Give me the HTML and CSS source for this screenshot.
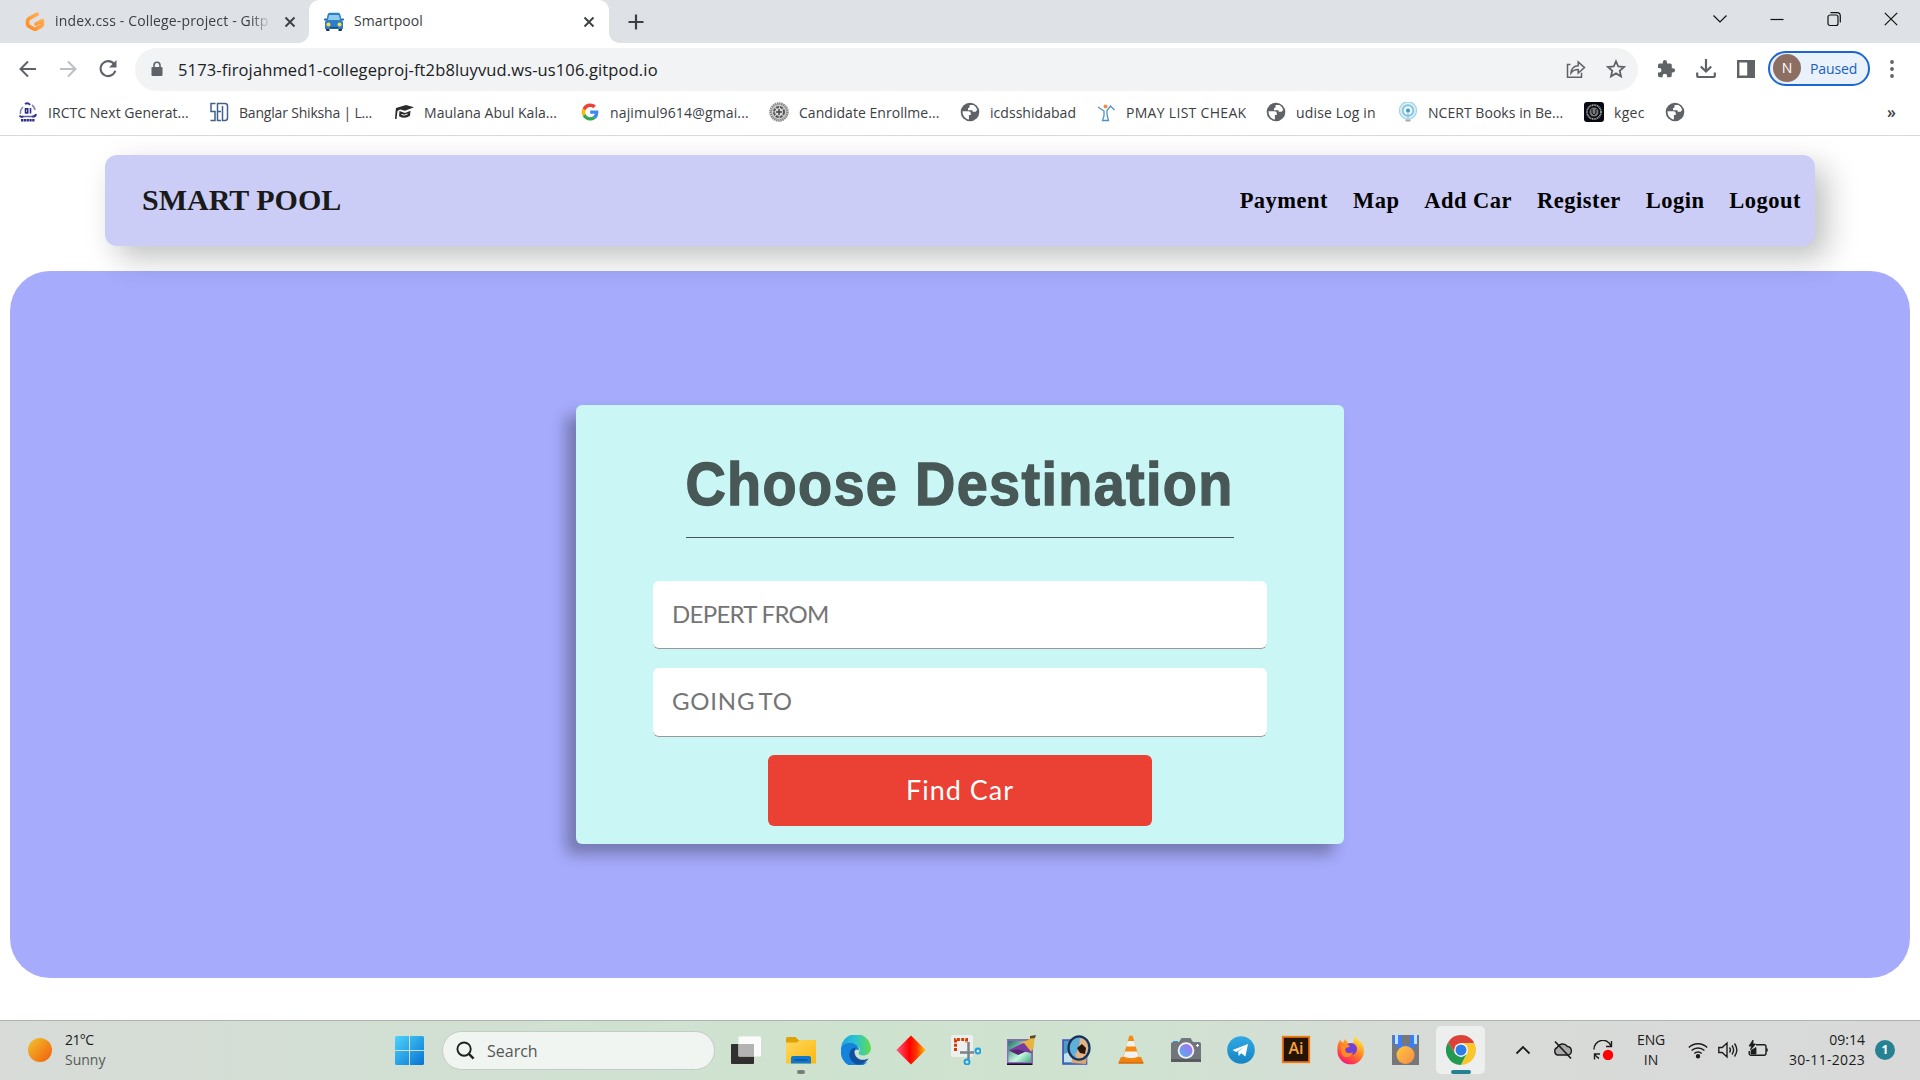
FILE: index.html
```html
<!DOCTYPE html>
<html lang="en">
<head>
<meta charset="utf-8">
<title>Smartpool</title>
<link rel="stylesheet" href="styles.css">
</head>
<body>
<svg class="defs" width="0" height="0">
  <defs>
    <linearGradient id="sun" x1="0" y1="0" x2="1" y2="1"><stop offset="0" stop-color="#f0c52e"/><stop offset="1" stop-color="#f25c0a"/></linearGradient>
    <linearGradient id="win" x1="0" y1="0" x2="1" y2="1"><stop offset="0" stop-color="#4fd3fb"/><stop offset="1" stop-color="#0673d2"/></linearGradient>
    <linearGradient id="gp" x1="0" y1="1" x2="1" y2="0"><stop offset="0" stop-color="#ff8a1f"/><stop offset="1" stop-color="#ffb45b"/></linearGradient>
    <linearGradient id="folder" x1="0" y1="0" x2="1" y2="1"><stop offset="0" stop-color="#ffd75e"/><stop offset="1" stop-color="#fbb90d"/></linearGradient>
    <linearGradient id="edgeA" x1="0" y1="0" x2="1" y2="0"><stop offset="0" stop-color="#1fa3e0"/><stop offset=".5" stop-color="#2cc4cf"/><stop offset="1" stop-color="#62dc4b"/></linearGradient>
    <linearGradient id="dia"><stop offset="0" stop-color="#ff5a7d"/><stop offset=".45" stop-color="#ff0000"/><stop offset=".7" stop-color="#ff3a00"/><stop offset="1" stop-color="#ffc400"/></linearGradient>
    <linearGradient id="lens" x1="0" y1="1" x2="1" y2="0"><stop offset="0" stop-color="#4cb1f5"/><stop offset="1" stop-color="#b36be8"/></linearGradient>
    <linearGradient id="tg" x1="0" y1="0" x2="0" y2="1"><stop offset="0" stop-color="#2fa9e4"/><stop offset="1" stop-color="#1784c4"/></linearGradient>
    <linearGradient id="ff" x1=".8" y1="0" x2=".2" y2="1"><stop offset="0" stop-color="#fff04a"/><stop offset=".45" stop-color="#ff8b22"/><stop offset=".8" stop-color="#ff3750"/><stop offset="1" stop-color="#e6158a"/></linearGradient>
    <linearGradient id="medal" x1="0" y1="0" x2="1" y2="1"><stop offset="0" stop-color="#ffc83a"/><stop offset="1" stop-color="#f88b4c"/></linearGradient>
    <linearGradient id="photo" x1="0" y1="0" x2="1" y2="1"><stop offset="0" stop-color="#0d6b58"/><stop offset=".6" stop-color="#c6f7e0"/><stop offset="1" stop-color="#39a57b"/></linearGradient>
    <symbol id="globe" viewBox="0 0 20 20"><circle cx="10" cy="10" r="9.300" fill="#5f6368"/><path d="M2.500 9.200H8.600q2.200 0 2.200 2v1.700H8.900V17.400C5.200 17 2.400 13.500 2.500 9.200ZM9.600 3H13.500Q16.300 4.500 17.200 7.800L15.700 9.800H12.600V8.200H8V6.200q1.600 0 1.600-1.600Z" fill="#fff"/></symbol>
    <symbol id="x" viewBox="0 0 12 12"><path d="M1.500 1.500l9 9M10.500 1.500l-9 9" stroke="#3c4043" stroke-width="1.900" fill="none"/></symbol>
  </defs>
</svg>

<header class="browser">
  <div class="tabstrip">
    <div class="tab tab-idle">
      <svg class="favicon" viewBox="0 0 20 20"><path d="M12.200 2.200L4 6.600Q2.600 7.400 2.600 9v3.200q0 1.300 1.200 2l5 2.700q1.200.6 2.400 0l5-2.700q1.200-.7 1.200-2V8.700l-6.300 3.500" fill="none" stroke="url(#gp)" stroke-width="3.700" stroke-linejoin="round" stroke-linecap="round"/></svg>
      <span class="tab-title fade">index.css - College-project - Gitp</span>
      <svg class="close"><use href="#x"/></svg>
    </div>
    <div class="tab tab-active">
      <svg class="favicon" viewBox="0 0 20 20"><path d="M2 14h3.500v5H3q-1 0-1-1ZM14.500 14H18v4q0 1-1 1h-2.500Z" fill="#28323b"/><path d="M3.500 3Q4 .8 6 .8h8q2 0 2.500 2.200L17.500 8Q19 9 19 10.500V17H1v-6.500Q1 9 2.500 8Z" fill="#2c7fc6"/><path d="M5.200 3h9.600l1.300 5H3.900Z" fill="#8fcdf0"/><rect x="0" y="6.500" width="3" height="2" rx="1" fill="#1b5f9c"/><rect x="17" y="6.500" width="3" height="2" rx="1" fill="#1b5f9c"/><path d="M6 15h8v1.500H6Z" fill="#174f85"/><circle cx="4.500" cy="12.500" r="2" fill="#ffd84b"/><circle cx="15.500" cy="12.500" r="2" fill="#ffd84b"/></svg>
      <span class="tab-title second">Smartpool</span>
      <svg class="close"><use href="#x"/></svg>
    </div>
    <svg class="newtab" viewBox="0 0 16 16"><path d="M8 .5v15M.5 8h15" stroke="#3c4043" stroke-width="2.200"/></svg>
    <div class="winctl">
      <svg viewBox="0 0 16 16"><path d="M1.500 4.500L8 11l6.500-6.500" /></svg>
      <svg viewBox="0 0 16 16"><path d="M1.500 8.500h13" /></svg>
      <svg viewBox="0 0 16 16"><rect x="2" y="4" width="10" height="10.500" rx="2"/><path d="M4.500 1.700h6.500q3.300 0 3.300 3.300v6.500"/></svg>
      <svg viewBox="0 0 16 16"><path d="M1.800 1.800l12.400 12.400M14.200 1.800L1.800 14.200"/></svg>
    </div>
  </div>

  <div class="toolbar">
    <svg class="tb" viewBox="0 0 20 20"><path d="M18 10H3M10 2.500L2.500 10l7.500 7.500" stroke="#5f6368" stroke-width="2" fill="none"/></svg>
    <svg class="tb" viewBox="0 0 20 20"><path d="M2 10h15M10 2.500l7.500 7.500-7.500 7.500" stroke="#bcbfc3" stroke-width="2" fill="none"/></svg>
    <svg class="tb" viewBox="0 0 20 20"><path d="M16.200 5.200A7.500 7.500 0 1 0 17.300 11.800" stroke="#5f6368" stroke-width="2.100" fill="none"/><path d="M18.500 1v7.500H11Z" fill="#5f6368"/></svg>
    <div class="omnibox">
      <svg class="lock" viewBox="0 0 12 16"><path d="M3 7V4.200a3 3 0 0 1 6 0V7" fill="none" stroke="#5f6368" stroke-width="1.600"/><rect x=".5" y="6" width="11" height="9" rx="1.300" fill="#5f6368"/></svg>
      <span class="url">5173-firojahmed1-collegeproj-ft2b8luyvud.ws-us106.gitpod.io</span>
      <svg class="share" viewBox="0 0 20 20"><path d="M4.500 5.500H1.500v12.800h14v-4.500M5 14c.4-4.600 3-7 7.200-7.200V3l6.300 5.600-6.300 5.500v-3.600C9 10.400 7 11.400 5 14Z" fill="none" stroke="#5f6368" stroke-width="1.500"/></svg>
      <svg class="star" viewBox="0 0 20 20"><path d="M10 2.300l2.300 5.200 5.700.5-4.300 3.800 1.300 5.600-5-3-5 3 1.300-5.600L2 8l5.700-.5Z" fill="none" stroke="#5f6368" stroke-width="1.800"/></svg>
    </div>
    <div class="actions">
      <svg viewBox="0 0 20 20"><path d="M17 9.200h-1.200V6q0-1.600-1.600-1.600H11V3.200a2.100 2.100 0 0 0-4.200 0v1.200H3.600Q2 4.400 2 6v3h1.200a2.300 2.300 0 0 1 0 4.600H2v3Q2 18.200 3.600 18.200h3V17a2.200 2.200 0 0 1 4.500 0v1.200h3.100q1.600 0 1.600-1.600v-3.200H17a2.100 2.100 0 0 0 0-4.200Z" fill="#5f6368"/></svg>
      <svg viewBox="0 0 20 20"><path d="M10 0v12M4.800 7.500l5.200 5 5.200-5M1.200 13.500v3q0 1.500 1.500 1.500h14.600q1.500 0 1.500-1.500v-3" stroke="#5f6368" stroke-width="2.200" fill="none"/></svg>
      <svg viewBox="0 0 20 20"><path fill-rule="evenodd" d="M1 1h18v18H1ZM3.400 3.500v13h7.800v-13Z" fill="#5f6368"/></svg>
    </div>
    <div class="profile"><b>N</b><span>Paused</span></div>
    <svg class="dots" viewBox="0 0 6 20"><circle cx="3" cy="3" r="1.900"/><circle cx="3" cy="10" r="1.900"/><circle cx="3" cy="17" r="1.900"/></svg>
  </div>

  <nav class="bookmarks">
    <a><svg viewBox="0 0 20 20"><path d="M2.500 12A8 8 0 0 1 5 5M14 3A8 8 0 0 1 17 8" fill="none" stroke="#8585bb" stroke-width="1.600"/><path d="M7 2q3-2 5 1M1.500 13.500q2 2.500 4 .5M14 14.500q3.500.5 4-2.500" fill="none" stroke="#33338e" stroke-width="2"/><path d="M7.500 6v5.500M7.500 6.700h2.200v4.200H7.500M12.500 6v5.500" stroke="#2c2c88" stroke-width="1.600" fill="none"/><path d="M5.500 14.500h9" stroke="#5a5aa5" stroke-width="1.500"/><path d="M3 18.300h14" stroke="#2c2c88" stroke-width="2.500" stroke-dasharray="2.300 .5"/></svg><span>IRCTC Next Generat...</span></a>
    <a class="tight"><svg viewBox="0 0 20 20"><path d="M6.500 1.500H2v8h4v9H1.500M12 1.500H8.500v17H12M8.500 9.500H12M12 1.500h4q2.500 0 2.500 2.500v12q0 2.500-2.500 2.500h-2.500V4" fill="none" stroke="#40618a" stroke-width="1.500"/></svg><span>Banglar Shiksha | L...</span></a>
    <a><svg viewBox="0 0 20 20"><path d="M2 6L12 3l8 2.200-9 3.600L6 7.500 3.500 9l-1 8H1l.6-8Z" fill="#2b2b2b"/><path d="M5.500 9l5.500 2 5.500-2.300-.5 5q-5 4-11 .5Z" fill="#2b2b2b"/><path d="M7.500 12.500q3 1.500 6-.5" stroke="#fff" fill="none"/></svg><span>Maulana Abul Kala...</span></a>
    <a class="loose"><svg viewBox="0 0 48 48"><path fill="#4285f4" d="M44 24.500c0-1.500-.1-2.600-.4-4H24.400v7.900h11c-.5 2.800-2.100 4.900-4.500 6.500l6.900 5.400c4.100-3.800 6.200-9.200 6.200-15.800Z"/><path fill="#34a853" d="M24.400 44.500c5.400 0 10-1.800 13.400-4.900l-6.900-5c-1.800 1.200-3.900 1.900-6.500 1.900-5.200 0-9.600-3.500-11.200-8.300L6.300 33.500C9.700 40 16.500 44.500 24.400 44.500Z"/><path fill="#fbbc05" d="M13.200 28.200a12.400 12.400 0 0 1 0-8L6.300 14.800a20.500 20.500 0 0 0 0 18.700Z"/><path fill="#ea4335" d="M24.400 11.800c3.700 0 6.200 1.600 7.600 2.900l6-5.900C34.500 5.600 29.800 3.600 24.400 3.600c-7.900 0-14.700 4.500-18.100 11.200l6.900 5.400c1.600-4.800 6-8.400 11.200-8.400Z"/></svg><span>najimul9614@gmai...</span></a>
    <a><svg viewBox="0 0 20 20"><circle cx="10" cy="10" r="8.500" fill="#ccc" stroke="#888" stroke-width="2.500" stroke-dasharray="1.500 .6"/><circle cx="10" cy="10" r="5" fill="#ddd" stroke="#555" stroke-width="2" stroke-dasharray="3 1"/><path d="M10 7v6M7 10h6" stroke="#444" stroke-width="1.500"/></svg><span>Candidate Enrollme...</span></a>
    <a><svg><use href="#globe"/></svg><span>icdsshidabad</span></a>
    <a class="looser"><svg viewBox="0 0 20 20"><path d="M2 5l6 4V14l-1.500 4.500h6L11 12.500V8.500L14.500 4l4 4" fill="none" stroke="#4b93c6" stroke-width="1.300"/><circle cx="9.500" cy="4.500" r="2" fill="#f08a4b"/></svg><span>PMAY LIST CHEAK</span></a>
    <a class="loose"><svg><use href="#globe"/></svg><span>udise Log in</span></a>
    <a><svg viewBox="0 0 20 20"><circle cx="10" cy="8.500" r="8.500" fill="#e6f4fb" stroke="#a6d4ea" stroke-width="1.500"/><circle cx="10" cy="8.500" r="5.400" fill="none" stroke="#7fbfdd" stroke-width="1.700"/><circle cx="10" cy="8.500" r="2" fill="#4797c6"/><path d="M10 10v6" stroke="#7fbfdd"/><path d="M7.500 18.500h5" stroke="#aaa" stroke-width="2"/></svg><span>NCERT Books in Be...</span></a>
    <a class="looser"><svg viewBox="0 0 20 20"><rect width="20" height="20" rx="3" fill="#070912"/><circle cx="10" cy="10" r="7" fill="none" stroke="#9b9b9b" stroke-width="1.800" stroke-dasharray="1.200 .5"/><circle cx="10" cy="10" r="4.500" fill="#777"/><path d="M8 7v4l2 2 2-2V7" stroke="#111" fill="none"/></svg><span>kgec</span></a>
    <a><svg><use href="#globe"/></svg></a>
    <b>»</b>
  </nav>
</header>

<main class="page">
  <header class="site-nav">
    <h2>SMART POOL</h2>
    <ul>
      <li>Payment</li><li>Map</li><li>Add Car</li><li>Register</li><li>Login</li><li>Logout</li>
    </ul>
  </header>
  <section class="hero">
    <form class="card">
      <h1><span>Choose Destination</span></h1>
      <input class="from" type="text" placeholder="DEPERT FROM">
      <input class="to" type="text" placeholder="GOING TO">
      <button type="button">Find Car</button>
    </form>
  </section>
</main>

<footer class="taskbar">
  <div class="weather">
    <svg viewBox="0 0 24 24"><circle cx="12" cy="12" r="12" fill="url(#sun)"/></svg>
    <div><p class="temp">21°C</p><p class="dim">Sunny</p></div>
  </div>
  <svg class="start" viewBox="0 0 29 29"><path d="M1.500 0H14v14H0V1.500Q0 0 1.500 0ZM15 0h12.500Q29 0 29 1.500V14H15ZM0 15h14v14H1.500Q0 29 0 27.500ZM15 15h14v12.500q0 1.500-1.500 1.500H15Z" fill="url(#win)"/></svg>
  <div class="search">
    <svg viewBox="0 0 20 20"><circle cx="8.500" cy="8.500" r="7" fill="none" stroke="#222" stroke-width="2"/><path d="M13.500 13.500l5 5" stroke="#222" stroke-width="2.500"/></svg>
    <span>Search</span>
  </div>
  <div class="apps">
    <div><svg viewBox="0 0 30 30"><rect y="9" width="23" height="20" rx="1" fill="#30302e"/><rect x="7.500" y="1.500" width="22.500" height="20" rx="1" fill="#fbfbfb"/><path d="M7.500 9H23v12.500H7.500Z" fill="#b3b3b3"/></svg></div>
    <div class="open"><svg viewBox="0 0 30 30"><path d="M0 3.500Q0 2 1.500 2h8l3 3H30v8H0Z" fill="#e0a106"/><path d="M0 7.500h11L13.500 5H29q1 0 1 1v22.500H0Z" fill="url(#folder)"/><path d="M5 28.500V23q0-2 2-2h16q2 0 2 2v5.500Z" fill="#0f78cf"/><path d="M8.500 25h13" stroke="#0a4d92" stroke-width="1.300"/></svg></div>
    <div><svg viewBox="0 0 30 30"><path d="M0 15A15 15 0 0 1 30 13C30 18 26 20.500 22 20.500c-4 0-5-2-4-3.500 1.500-2.500.5-6-4-6.500C7 9.800 1 13 0 15Z" fill="url(#edgeA)"/><path d="M0 15C0 10 5 7.500 10 8c5 .5 8 4 8 7-7-2-9 8-2 11.500 4 2 8 1.500 10.500 0A15 15 0 0 1 0 15Z" fill="#1583dc"/><path d="M12 13c-6 4-5 14 5 16.800 5-.3 8.500-3 10.500-6.300-4 2-9 2-12-1.500-2-2.500-3-6-.5-9.500Z" fill="#10509c"/></svg></div>
    <div><svg viewBox="0 0 30 30"><path d="M15 .5L29.700 15 15 29.500.3 15Z" fill="url(#dia)"/></svg></div>
    <div><svg viewBox="0 0 30 30"><rect width="22" height="22" rx="2.500" fill="#eef0f0"/><path d="M4.500 16V4.500H15.500V8" fill="none" stroke="#d83b01" stroke-width="3" stroke-dasharray="3 1.300"/><path d="M17.500 7v17M9 17.500h14" stroke="#7b8388" stroke-width="2.500"/><circle cx="16" cy="27" r="2.500" fill="none" stroke="#1a9fe0" stroke-width="1.900"/><circle cx="27" cy="16" r="2.500" fill="none" stroke="#1a9fe0" stroke-width="1.900"/></svg></div>
    <div><svg viewBox="0 0 30 30"><rect x="1" y="4.500" width="25.500" height="25.500" fill="#131018"/><rect x="1.700" y="5.200" width="24" height="22.500" fill="url(#photo)" stroke="#9268c9" stroke-width="1.400"/><path d="M14 8L22 5l3-3 4-.5-1 6-.5 6-4 4L17 9Z" fill="#e9b33f"/><path d="M24 1l6-1-1 3-5 .5Z" fill="#5b4a2a"/><path d="M2 15.500L15 9l3-1 8.500 10.500-6-1.500-7-1.500Z" fill="#7a3b9e"/><path d="M3 15.500l9-1 8 2-8 3.500Z" fill="#55276f"/></svg></div>
    <div><svg viewBox="0 0 30 30"><path d="M2 5h23.500v24H2Z" fill="#4f9cc9" stroke="#3d51ba" stroke-width="1.600"/><path d="M3 19l8-3 12 11H3Z" fill="#c5e2ec"/><path d="M10 28L18 4q9 0 9 10l-2 15Z" fill="#d9a674"/><ellipse cx="18" cy="13" rx="10.500" ry="12" fill="#5fb0d8"/><path d="M19 3q8 1 8 10t-10 11.500l-3-5 4-6Z" fill="#e6b284"/><path d="M16 13l5-4 4 4-1 6-5-1Z" fill="#29140a"/><ellipse cx="18" cy="13" rx="10.500" ry="11.700" fill="none" stroke="#183156" stroke-width="2.300"/></svg></div>
    <div><svg viewBox="0 0 30 30"><path d="M5 22h20l3 6.500H2Z" fill="#ef8211"/><path d="M13.300.8h3.400l6.300 22q-8 4-16 0Z" fill="#f58a12"/><path d="M11.800 6h6.400l1.600 5.500h-9.600ZM9 16.500h12l1.500 5q-7.500 3-15 0Z" fill="#f1f1f1"/><path d="M3 28h24" stroke="#c55f08"/></svg></div>
    <div><svg viewBox="0 0 30 30"><path d="M2 6h5v3H2Z" fill="#2795df"/><path d="M0 9q0-2 2-2h6l2.500-4h9L22 7h6q2 0 2 2v17.500H0Z" fill="#70767b"/><path d="M0 24h30v3H0Z" fill="#555b60"/><circle cx="15" cy="15.500" r="8.300" fill="#f4f4f6"/><circle cx="15" cy="15.500" r="6.500" fill="url(#lens)"/><path d="M26.500 9v3M25 10.500h3" stroke="#fff"/></svg></div>
    <div><svg viewBox="0 0 30 30"><circle cx="15" cy="15" r="13.800" fill="url(#tg)"/><path d="M6.500 15L22 9l-2.600 12.500-4.200-3.200-2.500 2.600-.6-4.400L18.500 12l-8.300 5Z" fill="#fff"/></svg></div>
    <div><svg viewBox="0 0 30 30"><rect x="1.800" y="1.800" width="26.400" height="25.400" fill="#251404" stroke="#f37a12" stroke-width="1.900"/><text x="15" y="19.200" text-anchor="middle" class="ai">Ai</text></svg></div>
    <div><svg viewBox="0 0 30 30"><path d="M2 9l2-4 3 3 2-4 3 4 5 0 2-7 4 5 1 0c3 3 4 6 4 10A13.300 13.300 0 0 1 1.400 16C1.400 13 1.500 11 2 9Z" fill="url(#ff)"/><circle cx="15" cy="14" r="6" fill="#7140d6"/><path d="M5 10q7-3 9 2-5 0-5 4 3 4 8 1-2 6-8 5-5-2-4-12Z" fill="#ff8b22"/></svg></div>
    <div><svg viewBox="0 0 30 30"><rect x="1" width="27" height="30" fill="#777"/><path d="M2 0h9v10h8V0h8v8L20 15H10L2 8Z" fill="#3d7bf7"/><path d="M4 0h3v9H4ZM23 0h3v9h-3Z" fill="#bfe4ff"/><path d="M11 0h8v9h-8Z" fill="#777"/><circle cx="14.500" cy="20" r="9" fill="url(#medal)"/></svg></div>
    <div class="open current"><svg viewBox="0 0 48 48"><path d="M24 13H45.300A24 24 0 0 0 3.200 12L14.500 29.500Z" fill="#dc4338"/><path d="M24 48A24 24 0 0 1 3.200 12L14.500 29.500 33.500 29.500Z" fill="#229a50"/><path d="M24 13H45.300A24 24 0 0 1 24 48L33.500 29.500Z" fill="#fac62d"/><circle cx="24" cy="24" r="11" fill="#fff"/><circle cx="24" cy="24" r="8.800" fill="#2b7de9"/></svg></div>
  </div>
  <div class="tray">
    <svg viewBox="0 0 20 20"><path d="M3.500 13.500L10 7l6.500 6.500" stroke-width="1.800"/></svg>
    <svg viewBox="0 0 20 20"><path d="M4.500 15a4 4 0 0 1-.3-7.500A6 6 0 0 1 14.500 6.500 4.400 4.400 0 0 1 15.500 15Z" fill="#aaa"/><path d="M2 1.500l16 17" stroke-width="1.700"/></svg>
    <svg viewBox="0 0 20 20"><path d="M1 9.500A8.800 8.800 0 0 1 18 6M18.500 1v5.500H13M6 18.500A8.800 8.800 0 0 1 2 14.500M1.500 19.500V14H7"/><circle cx="15" cy="15" r="5.200" fill="red" stroke="none"/></svg>
    <div class="lang"><p>ENG</p><p>IN</p></div>
    <svg viewBox="0 0 20 20"><path d="M.8 7.600a13 13 0 0 1 18.400 0M3.600 10.600a9 9 0 0 1 12.800 0M6.300 13.500a5.200 5.200 0 0 1 7.400 0"/><circle cx="10" cy="16.300" r="1.500" fill="#1c1c1c"/></svg>
    <svg viewBox="0 0 20 20"><path d="M.8 7.500h3.400L9 3v14l-4.800-4.500H.8ZM11.500 7.500q1.800 2.500 0 5M14 5.500q3.200 4.500 0 9M16.500 3.500q4.700 6.500 0 13"/></svg>
    <svg viewBox="0 0 20 20"><path d="M8 4.800h8q2 0 2 2v6.500q0 2-2 2H3.200q-2 0-2-2V11M19 8.500v3"/><path d="M5 0L1 6h2.500L2.500 10 7.500 4H5ZM3 10.500L8 7.500v6.500H3Z" fill="#1c1c1c" stroke-width=".8"/></svg>
    <div class="clock"><p>09:14</p><p class="date">30-11-2023</p></div>
    <b class="badge">1</b>
  </div>
</footer>
</body>
</html>
```
FILE: styles.css
```css
* { box-sizing: border-box; }
body {
  margin: 0;
  height: 1080px;
  display: flex;
  flex-direction: column;
  overflow: hidden;
  background: #fff;
  font-family: "Open Sans", sans-serif;
}
p, h1, h2, ul { margin: 0; padding: 0; }
svg { display: block; flex: none; }
.defs { position: absolute; }

/* Browser window */
.browser {
  height: 136px;
  flex: none;
  border-bottom: 1px solid #d9dadc;
  color: #3c4043;
  font-size: 14px;
}
.tabstrip {
  height: 43px;
  display: flex;
  align-items: center;
  background: #dee1e6;
}
.tab { height: 43px; display: flex; align-items: center; }
.tab-idle { width: 309px; padding: 0 13px 0 25px; }
.tab-active {
  position: relative;
  width: 300px;
  padding: 0 14px 0 15px;
  background: #fff;
  border-radius: 10px 10px 0 0;
}
.tab-active::before, .tab-active::after {
  content: "";
  position: absolute;
  bottom: 0;
  width: 10px;
  height: 10px;
}
.tab-active::before { left: -10px; background: radial-gradient(circle at 0 0, #dee1e6 9.500px, #fff 10px); }
.tab-active::after { right: -10px; background: radial-gradient(circle at 100% 0, #dee1e6 9.500px, #fff 10px); }
.favicon { width: 20px; height: 20px; margin-right: 10px; }
.tab-title { flex: 1; overflow: hidden; white-space: nowrap; margin-top: -2px; }
.second { letter-spacing: .1px; }
.fade { letter-spacing: .15px; mask-image: linear-gradient(90deg, #000 196px, transparent 216px); }
.close { width: 12px; height: 12px; }
.tab-idle .close { margin-left: 12px; }
.newtab { width: 16px; height: 16px; margin-left: 19px; }
.winctl { display: flex; gap: 41px; margin-left: auto; margin-right: 21px; padding-bottom: 5px; }
.winctl svg { width: 16px; height: 16px; fill: none; stroke: #111; stroke-width: 1.2; }

.toolbar { height: 52px; display: flex; align-items: center; padding: 0 25px 0 18px; }
.tb { width: 20px; height: 20px; margin-right: 20px; }
.omnibox {
  width: 1503px;
  height: 43px;
  margin-left: -3px;
  padding: 0 12px 0 16px;
  display: flex;
  align-items: center;
  border-radius: 22px;
  background: #f1f3f4;
  color: #202124;
  font-size: 16.500px;
}
.lock { width: 12px; height: 16px; margin-right: 15px; }
.url { flex: 1; letter-spacing: .13px; }
.share { width: 20px; height: 20px; margin-right: 20px; }
.star { width: 20px; height: 20px; }
.actions { display: flex; gap: 20px; margin-left: 18px; }
.actions svg { width: 20px; height: 20px; }
.profile {
  width: 102px;
  height: 35px;
  margin: 0 0 2px 12px;
  padding-left: 3px;
  display: flex;
  align-items: center;
  gap: 9px;
  border: 2px solid #1a66d2;
  border-radius: 18px;
  background: #e9f1fb;
  color: #1a5fc8;
  letter-spacing: -.1px;
}
.profile b {
  width: 28px;
  height: 28px;
  border-radius: 50%;
  background: #8d6e63;
  color: #fff;
  font-weight: 400;
  line-height: 28px;
  text-align: center;
}
.dots { width: 6px; height: 20px; margin-left: auto; fill: #5f6368; }

.bookmarks {
  height: 36px;
  padding: 0 24px 2px 18px;
  display: grid;
  grid-template-columns: 191px 185px 186px 189px 191px 136px 170px 132px 186px 81px 1fr auto;
  align-items: center;
}
.bookmarks a { display: flex; align-items: center; gap: 10px; white-space: nowrap; letter-spacing: .04px; }
.bookmarks .tight { letter-spacing: -.19px; }
.bookmarks .loose { letter-spacing: .15px; }
.bookmarks .looser { letter-spacing: .3px; }
.bookmarks svg { width: 20px; height: 20px; }
.bookmarks b { font-weight: 600; font-size: 16px; }

/* Web page */
.page { flex: 1; padding: 19px 10px 0; }
.site-nav {
  position: relative;
  height: 91px;
  margin: 0 95px 25px;
  padding: 0 14px 0 37px;
  display: flex;
  align-items: center;
  justify-content: space-between;
  border-radius: 12px;
  background: #cbcdf6;
  box-shadow: 12px 12px 30px rgba(0, 14, 8, .25);
  font-family: "Liberation Serif", serif;
}
.site-nav h2 { font-size: 30px; padding-bottom: 2px; color: #1a1a1a; }
.site-nav ul { display: flex; gap: 24.800px; list-style: none; }
.site-nav li { font-size: 22.500px; font-weight: 700; letter-spacing: .5px; color: #000; }
.hero {
  height: 707px;
  display: flex;
  align-items: center;
  justify-content: center;
  border-radius: 40px;
  background: #a6abfc;
}
.card {
  width: 768px;
  height: 439px;
  padding-top: 38px;
  display: flex;
  flex-direction: column;
  align-items: center;
  border-radius: 6px;
  background: #caf7f5;
  box-shadow: -10px 10px 15px rgba(0, 0, 0, .3);
}
.card h1 {
  height: 95px;
  width: 548px;
  margin-bottom: 43px;
  padding-top: 6px;
  display: flex;
  justify-content: center;
  border-bottom: 1px solid #475857;
  color: #475857;
  white-space: nowrap;
  font: 700 62px/70px "Liberation Sans", sans-serif;
}
.card h1 span { flex: none; letter-spacing: 1.500px; -webkit-text-stroke: 1.400px #475857; transform: scaleX(.9); }
.card input {
  width: 614px;
  height: 68px;
  margin-bottom: 19px;
  padding: 0 19px 2px;
  border: 0;
  border-bottom: 1px solid #999;
  border-radius: 6px;
  background: #fff;
  font: 24px Lato, sans-serif;
}
.card .from { letter-spacing: -.7px; }
.card .to { height: 69px; margin-bottom: 18px; padding-bottom: 3px; letter-spacing: .8px; word-spacing: -3px; }
.card input::placeholder { color: #757575; }
.card button {
  width: 384px;
  height: 71px;
  padding-bottom: 3px;
  border: 0;
  border-radius: 6px;
  background: #eb4034;
  color: #fff;
  letter-spacing: 1px;
  font: 27px Lato, sans-serif;
}

/* Desktop taskbar */
.taskbar {
  height: 60px;
  flex: none;
  display: flex;
  align-items: center;
  border-top: 1px solid #adb2ae;
  background: linear-gradient(90deg, #d8dbd8, #d2dfd3 20%, #cee3cf 45%, #d0e2d1 60%, #d8dbd8 75%, #d9d9da);
  color: #1c1c1c;
  font-size: 14px;
}
.weather { width: 395px; padding: 0 0 2px 28px; display: flex; align-items: center; gap: 13px; line-height: 20px; }
.weather svg { width: 24px; height: 24px; }
.temp { letter-spacing: -.6px; }
.dim { color: #555a56; }
.start { width: 29px; height: 29px; }
.search {
  width: 273px;
  height: 39px;
  margin-left: 18px;
  padding-left: 13px;
  display: flex;
  align-items: center;
  gap: 12px;
  border: 1px solid #c3ccc4;
  border-radius: 20px;
  background: #f0f5f1;
  color: #555;
  font-size: 16px;
}
.search svg { width: 19px; height: 19px; }
.apps { display: flex; margin-left: 3px; padding-bottom: 1px; }
.apps div { position: relative; width: 55px; height: 48px; display: flex; align-items: center; justify-content: center; }
.apps svg { position: relative; width: 30px; height: 30px; }
.ai { font: 600 16px "Open Sans", sans-serif; fill: #f9a13c; }
.open::after {
  content: "";
  position: absolute;
  bottom: 0;
  width: 8px;
  height: 4px;
  border-radius: 2px;
  background: #777d78;
}
.current::before { content: ""; position: absolute; inset: 0 3px; border-radius: 5px; background: #ecefed; }
.current::after { width: 20px; background: #268292; }
.tray { flex: 1; display: flex; align-items: center; padding: 0 0 2px 25px; }
.tray svg { width: 20px; height: 20px; margin-right: 20px; fill: none; stroke: #1c1c1c; stroke-width: 1.4; }
.tray .lang ~ svg { margin-right: 10px; }
.lang { width: 28px; margin: 0 23px 0 4px; text-align: center; line-height: 20px; letter-spacing: -.1px; }
.clock { margin-left: auto; text-align: right; line-height: 20px; }
.date { letter-spacing: .3px; }
.badge {
  width: 20px;
  height: 20px;
  margin: 0 25px 0 10px;
  border-radius: 50%;
  background: #268292;
  color: #fff;
  font-size: 12px;
  line-height: 20px;
  text-align: center;
}
```
